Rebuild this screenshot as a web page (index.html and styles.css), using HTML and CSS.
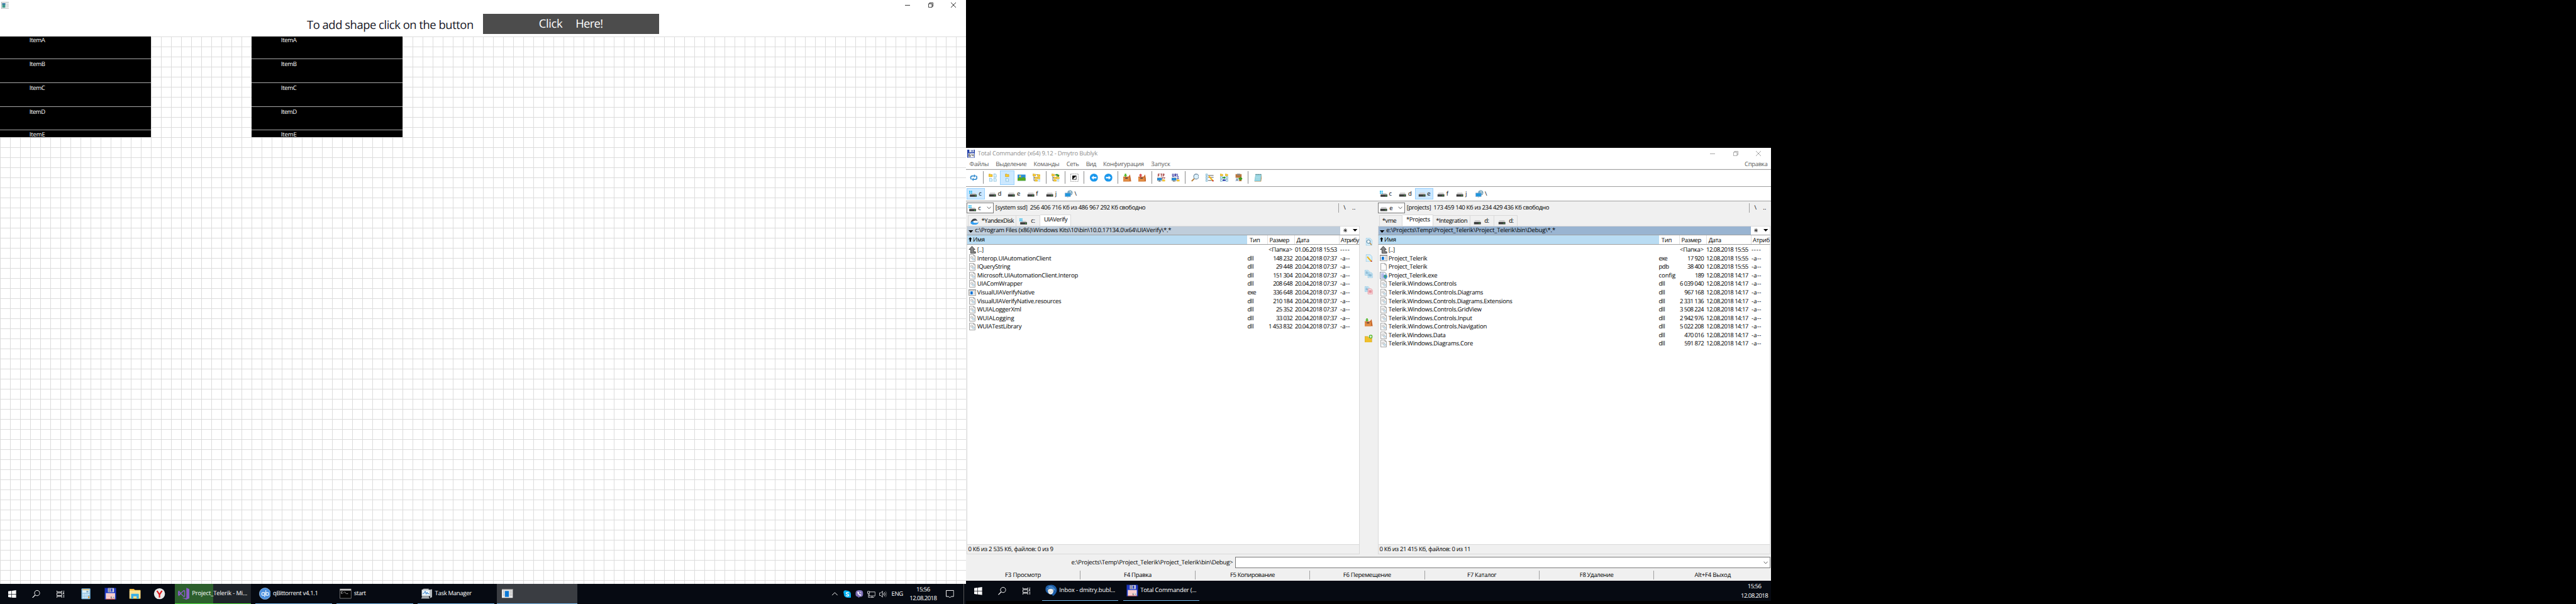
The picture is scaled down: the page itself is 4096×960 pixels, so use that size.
FILE: index.html
```html
<!DOCTYPE html>
<html lang="ru">
<head>
<meta charset="utf-8">
<title>Desktop</title>
<link rel="stylesheet" href="styles.css">
</head>
<body>
<svg class="defs" aria-hidden="true">
  <symbol id="app" viewBox="0 0 16 14"><rect x=".5" y=".5" width="15" height="13" fill="#f4f4f4" stroke="#a9b0b0"/><rect x="2" y="2.5" width="6" height="9" fill="#3f9a8a"/><path d="M2 2.500h6v3H2z" fill="#3c78a8"/><path d="M9 2.500h3v9H9z" fill="#dfe3e3"/><path d="M13 3h1v8h-1z" fill="#b8c0c0"/></symbol>
  <symbol id="min" viewBox="0 0 10 10"><path d="M0 5.500h10" stroke="currentColor" fill="none"/></symbol>
  <symbol id="restore" viewBox="0 0 10 10"><path d="M.5 2.500h7v7h-7zM2.500 2.500v-2h7v7h-2" stroke="currentColor" fill="none"/></symbol>
  <symbol id="close" viewBox="0 0 10 10"><path d="M0 0l10 10M10 0L0 10" stroke="currentColor" fill="none"/></symbol>
  <symbol id="win" viewBox="0 0 16 16"><path d="M0 2.300L6.600 1.300V7.600H0zM7.400 1.200L16 0v7.600H7.400zM0 8.400h6.600v6.300L0 13.700zM7.400 8.400H16V16l-8.600-1.200z" fill="#fff"/></symbol>
  <symbol id="search" viewBox="0 0 16 16"><circle cx="10" cy="5.800" r="5.200" fill="none" stroke="#fff" stroke-width="1.200"/><path d="M6.200 9.700L.5 15.500" stroke="#fff" stroke-width="1.400"/></symbol>
  <symbol id="tview" viewBox="0 0 16 16"><path d="M.5 1v2.500h10V1M.5 15v-2.500h10V15M.5 5.500h10v5H.5zM14.500 1v2.500M14.500 8.500V15" fill="none" stroke="#fff" stroke-width="1.200"/><path d="M13 4.500h3v3h-3z" fill="#fff"/></symbol>
  <symbol id="calc" viewBox="0 0 18 22"><rect x=".5" y=".5" width="17" height="21" rx="1" fill="#8fc3e6" stroke="#5e9fca"/><path d="M2 2h14v2H2z" fill="#f2c36a"/><path d="M2 4h14v5H2z" fill="#dff1fb"/><path d="M10 5h4v3h-4z" fill="#7ea9c4"/><path d="M2.500 11h2.500v2H2.500zM6.300 11h2.500v2H6.300zM10 11h2.500v2H10zM13.500 11H16v2h-2.500zM2.500 14.300h2.500v2H2.500zM6.300 14.300h2.500v2H6.300zM10 14.300h2.500v2H10zM2.500 17.600h2.500v2H2.500zM6.300 17.600h2.500v2H6.300zM10 17.600h2.500v2H10z" fill="#f1f9fe"/><path d="M13.500 16H16v4h-2.500z" fill="#f0a030"/></symbol>
  <symbol id="floppy" viewBox="0 0 24 24"><path d="M.5.5h22l1 1v22H.5z" fill="#2038c0" stroke="#10206c"/><path d="M7 1h12v8H7z" fill="#d4d4dc"/><path d="M8 1h4v8H8z" fill="#8e8ea4"/><path d="M13 2h3v6h-3z" fill="#2038c0"/><path d="M3 11h18v12H3z" fill="#fff5f5"/><path d="M4 13h16M4 16h16M4 19h9" stroke="#f0a0a0" stroke-width="1.500"/><path d="M3 22h18v1.500H3z" fill="#c03030"/><path d="M13 18h2M13 18v3h2v-1.500h-2M17 18v1.500h2M19 18v3" stroke="#555" stroke-width=".8" fill="none"/></symbol>
  <symbol id="tc64" viewBox="0 0 16 16"><path d="M0 0h15l1 1v15H0z" fill="#2440a8"/><path d="M4 0h9v5H4z" fill="#dde2ee"/><path d="M8.500 1h2v3h-2z" fill="#2440a8"/><path d="M2 7h12v8H2z" fill="#fff"/><path d="M6.500 8.500h-3v5h3V11h-3M9 8.500V11h3.500M12 8.500v5" stroke="#333" fill="none"/></symbol>
  <symbol id="explorer" viewBox="0 0 22 20"><path d="M1 1h8l2 2h10v16H1z" fill="#f0b93a"/><path d="M1 4h20v14H1z" fill="#fde394"/><path d="M4 11q0-1 1-1h12q1 0 1 1v8h-4v-4.500H8V19H4z" fill="#3bb0e6"/></symbol>
  <symbol id="yandex" viewBox="0 0 22 22"><circle cx="11" cy="11" r="11" fill="#e9e9e9"/><path d="M6 5l5 7.500L16 5M11 12v6.500" fill="none" stroke="#e0181c" stroke-width="2.800"/></symbol>
  <symbol id="vs" viewBox="0 0 24 24"><path d="M17 0l6 2.500v19L17 24 8 20.500l9 .5z" fill="#8a5cc8"/><path d="M2 7.500v7.500l3.500-3.800zM2 7l3.500 4.200L12 5.500l1.500.8V17l-1.500.8-6.500-6L2 15.500l-1-.8V7.500z" fill="none" stroke="#8a5cc8" stroke-width="1.700"/></symbol>
  <symbol id="qb" viewBox="0 0 24 24"><circle cx="12" cy="12" r="11.500" fill="#4b8fdc" stroke="#9cc6f2"/><circle cx="8.300" cy="12.500" r="3" fill="none" stroke="#e4f0fc" stroke-width="1.500"/><path d="M11.300 9v10M13.600 5v11" stroke="#e4f0fc" stroke-width="1.500"/><circle cx="16.700" cy="12.500" r="3" fill="none" stroke="#e4f0fc" stroke-width="1.500"/></symbol>
  <symbol id="cmd" viewBox="0 0 24 20"><path d="M.5.500h23v19H.5z" fill="#050505" stroke="#9a9a9a"/><path d="M1 1h22v2.500H1z" fill="#e4e4e4"/><path d="M6 6H3.500v3.500H6M8 6.500v.8M8 8.500v.8M10 6l2.500 3.500M13.500 10H17" stroke="#ddd" fill="none"/></symbol>
  <symbol id="tm" viewBox="0 0 24 22"><path d="M3 3l3-2h11l-2 2z" fill="#c9cdd0"/><path d="M2 3h17v13H2z" fill="#e4e8ea"/><path d="M4 5h13v9H4z" fill="#e9f6ff"/><path d="M4 11l3-1 2-4 2 6 2-4 1 3h3" fill="none" stroke="#2c78c4" stroke-width="1.200"/><path d="M19 3l4-1v16l-4 2z" fill="#b4b9bd"/><path d="M3 16h13l2 5H1z" fill="#a4a9ad"/></symbol>
  <symbol id="appwin" viewBox="0 0 22 18"><path d="M0 0h22v18H0z" fill="#eee"/><path d="M0 0h22v2H0z" fill="#8b8b8b"/><path d="M6 4h8v12H6z" fill="#0a78d6"/><path d="M2 4.500h3M2 7.500h3M2 10.500h3M2 13.500h3M15.500 4.500h5M15.500 7.500h5M15.500 10.500h5M15.500 13.500h5" stroke="#999"/></symbol>
  <symbol id="up" viewBox="0 0 12 7"><path d="M.5 6.500L6 1l5.500 5.500" stroke="#fff" fill="none" stroke-width="1.200"/></symbol>
  <symbol id="skype" viewBox="0 0 16 16"><circle cx="8" cy="8" r="7" fill="#00aff0"/><circle cx="4.500" cy="4.500" r="4.300" fill="#00aff0"/><circle cx="11.500" cy="11.500" r="4.300" fill="#00aff0"/><path d="M10.800 5.600C10 4 5.600 4 5.600 6.100c0 2.300 5.200 1.500 5.200 3.800 0 2.200-4.700 2.200-5.500.3" stroke="#fff" stroke-width="1.700" fill="none"/></symbol>
  <symbol id="viber" viewBox="0 0 16 16"><path d="M8 0c6 0 7.500 2 7.500 6.800S14 13.500 8.500 13.500L6 16v-2.700C1.500 12.500.5 11 .5 6.800S2 0 8 0z" fill="#7d6fb6"/><path d="M4.500 3.500c-1 2.500 3 8 6.500 7.500l.8-1.500L9.800 8l-1 .8C7.800 8.300 7 7 6.700 6l.8-1-1.200-2zM8.500 3c2 .2 3 1.500 3.200 3.500" fill="#fff" stroke="#fff" stroke-width=".4"/></symbol>
  <symbol id="net" viewBox="0 0 16 16"><path d="M5 3.500h10.500v8H4V8M9.500 11.500v3M5.500 14.500h8M.5 2.500h4v4h-4zM2.500 6.500v8H5" stroke="#fff" fill="none"/></symbol>
  <symbol id="vol" viewBox="0 0 16 16"><path d="M.5 5.500h2.500L6.500 2v12L3 10.500H.5zM8.500 6q1.500 2 0 4M10.500 4q3 4 0 8" stroke="#fff" fill="none"/><path d="M12.500 2q4.500 6 0 12" stroke="#777" fill="none"/></symbol>
  <symbol id="note" viewBox="0 0 16 16"><path d="M.6.600h14.800v12H10.500L8 15.300l-2.500-2.700H.6z" stroke="#fff" fill="none" stroke-width="1.200"/></symbol>
  <symbol id="bird" viewBox="0 0 24 24"><path d="M12 .5C19 0 24 6 23.500 12S17 23 15 23.500c1-3-2-3.500-5-4S0 16 .5 9 5 1 12 .5z" fill="#1f5fa8"/><path d="M5 11q6-5 12 0-1 9-6 9t-6-9z" fill="#f1f1ee"/><path d="M3 9q8-6 15 1M7 4q9-2 13 8" stroke="#7cb9ea" fill="none"/><path d="M5 11l6 5 6-5" stroke="#b0b0a8" fill="none"/></symbol>

  <symbol id="i-ref" viewBox="0 0 16 16"><path d="M9 4.500H5Q1.800 4.800 1.800 8q0 2 1.500 3.300M7 11.500h4q3.200-.3 3.200-3.500 0-2-1.500-3.300" stroke="#3b8fd0" stroke-width="2.200" fill="none"/><path d="M8.500 1.200v6.600L12.300 4.500zM7.500 8.200v6.600L3.700 11.500z" fill="#3b8fd0"/></symbol>
  <symbol id="fold" viewBox="0 0 8 6"><path d="M.4.400h3l1 1h3.200v4.200H.4z" fill="#fccf30" stroke="#b98a10" stroke-width=".8"/></symbol>
  <symbol id="doc" viewBox="0 0 6 7"><path d="M.4.400h3.400L5.600 2.200v4.400H.4z" fill="#d9f0fc" stroke="#5fa6c8" stroke-width=".8"/></symbol>
  <symbol id="i-thumb" viewBox="0 0 16 16"><use href="#fold" x="0" y="0" width="8" height="7"/><use href="#doc" x="9.500" y="0" width="6.500" height="7.500"/><use href="#doc" x="1" y="8.500" width="6.500" height="7.500"/><use href="#doc" x="9.500" y="8.500" width="6.500" height="7.500"/></symbol>
  <symbol id="i-full" viewBox="0 0 16 16"><use href="#fold" x="4" y="0" width="8" height="7"/><use href="#doc" x="5" y="8.500" width="6.500" height="7.500"/></symbol>
  <symbol id="i-pic" viewBox="0 0 16 16"><path d="M0 2h16v12H0z" fill="#2a8fd8"/><path d="M0 10q4-5 7-1 4-4 9 0v5H0z" fill="#56a81e"/><circle cx="5" cy="5" r="2" fill="#ffd83c"/></symbol>
  <symbol id="i-tree" viewBox="0 0 16 16"><path d="M2.500 4v10H10M2.500 8H10M7 2h3" stroke="#555" fill="none"/><use href="#fold" x="0" y="0" width="6.500" height="5"/><use href="#fold" x="9" y="1" width="6.500" height="5"/><use href="#fold" x="4" y="6" width="6" height="5"/><use href="#fold" x="10" y="6" width="6" height="5"/><use href="#fold" x="4" y="11" width="6" height="5"/><use href="#doc" x="11" y="11" width="4.500" height="5"/></symbol>
  <symbol id="i-branch" viewBox="0 0 16 16"><use href="#i-tree" width="16" height="16"/><path d="M8 3.500Q11 0 13 3.500" stroke="#18902c" stroke-width="2" fill="none"/><path d="M10.500 3H16l-2.700 3.500z" fill="#18902c"/></symbol>
  <symbol id="i-sel" viewBox="0 0 16 16"><path d="M.5.500h15v15H.5z" fill="none" stroke="#333" stroke-dasharray="1 1"/><path d="M4.500 4.500h7v7h-7z" fill="#fff" stroke="#000"/><path d="M4 12V4h8z" fill="#000"/></symbol>
  <symbol id="i-left" viewBox="0 0 16 16"><circle cx="8" cy="8" r="8" fill="#1a97ec"/><path d="M3 8l4.500-4v2.500H13v3H7.500V12z" fill="#fff"/></symbol>
  <symbol id="i-right" viewBox="0 0 16 16"><circle cx="8" cy="8" r="8" fill="#1a97ec"/><path d="M13 8L8.500 4v2.500H3v3h5.500V12z" fill="#fff"/></symbol>
  <symbol id="box" viewBox="0 0 16 16"><path d="M0 6h10.500l3-4.500L16 15.500H0z" fill="#c8682a"/><path d="M0 7.500h12.500v8H0z" fill="#e08a42"/><path d="M4 8h5v2H4z" fill="#4a3a48"/></symbol>
  <symbol id="i-pack" viewBox="0 0 16 16"><use href="#box" width="16" height="16"/><path d="M3 0h3v3h2.200L4.500 6.500.8 3H3z" fill="#52b828"/></symbol>
  <symbol id="i-unpack" viewBox="0 0 16 16"><use href="#box" width="16" height="16"/><path d="M3 6.500h3v-3h2.200L4.500 0 .8 3.500H3z" fill="#d84848"/></symbol>
  <symbol id="pcnet" viewBox="0 0 16 16"><path d="M0 8.500h9v5H0z" fill="#1e90e0" stroke="#555" stroke-width=".6"/><path d="M2 15.500h6M4.500 13.500v2" stroke="#333"/><use href="#fold" x="10" y="11" width="6" height="5"/></symbol>
  <symbol id="i-ftp" viewBox="0 0 16 16"><path d="M2 6V.500h3M2 3h2.500M6.500.5h3.400M8.200.5V6M11.500 6V.500h2.300v2.800h-2.300" stroke="#8c1010" fill="none" stroke-width="1.100"/><path d="M9.500 8.500h6M11 7L9.500 8.500 11 10M14 7l1.500 1.500L14 10" stroke="#8c1010" fill="none"/><use href="#pcnet" width="16" height="16"/></symbol>
  <symbol id="i-url" viewBox="0 0 16 16"><path d="M1.600 0v5.500h2.600V0M6.600 6V.500H9v2.300H6.600M7.800 3L9.300 6M11.500 0v5.500H14" stroke="#10108c" fill="none" stroke-width="1.100"/><path d="M12.500 7v4M10.500 9h4" stroke="#10108c"/><use href="#pcnet" width="16" height="16"/></symbol>
  <symbol id="i-find" viewBox="0 0 16 16"><path d="M6.500 9.500L1 15" stroke="#b8803c" stroke-width="2.400"/><circle cx="10" cy="5.800" r="5" fill="#dcf1fc" stroke="#68849a" stroke-width="1.300"/></symbol>
  <symbol id="i-ren" viewBox="0 0 16 16"><path d="M5 3.500h11M5 7.500h11M5 13.500h11" stroke="#333"/><path d="M.5.500h3v4h-3zM.5 6h3v4h-3zM.5 11.500h3v4h-3z" fill="#d9f0fc" stroke="#68a6c4"/><path d="M6.500 5l8 9" stroke="#f2b41c" stroke-width="2.600"/><path d="M13.500 13l2 2.500" stroke="#d02020" stroke-width="2"/></symbol>
  <symbol id="i-sync" viewBox="0 0 16 16"><use href="#fold" x="0" y="0" width="6" height="5"/><use href="#fold" x="10" y="0" width="6" height="5"/><path d="M.5 6h4v4h-4zM.5 11.500h4v4h-4zM11.500 6h4v4h-4zM11.500 11.500h4v4h-4z" fill="#d9f0fc" stroke="#68a6c4"/><path d="M5 6.800h3V5l3 3-3 2.600V9H5z" fill="#108c20"/><path d="M11 11.800H8V10l-3 3 3 2.600V14h3z" fill="#1020a0"/></symbol>
  <symbol id="i-clip" viewBox="0 0 16 16"><path d="M2 1h12v14H2z" fill="#b9763c"/><path d="M5 0h6v3H5z" fill="#8d8d8d"/><path d="M1 8h8v8H1z" fill="#f0f4f8"/><path d="M3 14.500l2-5 2 5M3.700 13h2.600" stroke="#3c6c9c" fill="none"/><path d="M8 8.500h3.500V6L16 10l-4.500 4v-2.500H8z" fill="#3a9c1c"/></symbol>
  <symbol id="i-pad" viewBox="0 0 16 16"><path d="M3 2h13l-2 14H1z" fill="#b98b50"/><path d="M3 1h12l-2 14H.5z" fill="#8ed0de"/><path d="M3.500 1v1.500M5.500 1v1.500M7.500 1v1.500M9.500 1v1.500M11.500 1v1.500M13.500 1v1.500" stroke="#355"/><path d="M3.500 5h9M3 8h9M3 11h9" stroke="#c8ecf2"/></symbol>
  <symbol id="hdd" viewBox="0 0 16 13"><path d="M3 4h10l2 3.500H1z" fill="#c9c9c9"/><path d="M1 7.500h14v4.500H1z" fill="#3b3b3b"/><path d="M11 9h2v1.500h-2z" fill="#3ee04a"/></symbol>
  <symbol id="hddw" viewBox="0 0 16 13"><path d="M5 5h8l2.500 3H1z" fill="#c9c9c9"/><path d="M1.500 8h14v4.500h-14z" fill="#3b3b3b"/><path d="M12 9.500h2V11h-2z" fill="#3ee04a"/><path d="M0 0h2.500v2.500H0zM3.500 0H6v2.500H3.500zM0 3.500h2.500V6H0zM3.500 3.500H6V6H3.500z" fill="#19b4ee"/></symbol>
  <symbol id="globe" viewBox="0 0 16 16"><circle cx="10.500" cy="5.500" r="5.300" fill="#7ba6bc"/><path d="M8 1q4 1 6 7M13 1.500Q9 5 9 10" stroke="#d8e8ee" fill="none"/><path d="M.5 6h11v7H.5z" fill="#1d95dc" stroke="#9ac" stroke-width=".8"/><path d="M3 15.500h7M6 13v2" stroke="#8aa"/></symbol>
  <symbol id="ydisk" viewBox="0 0 17 13"><path d="M1 6Q5-1 11 1q3 3 5 7L1 9z" fill="#3d434a"/><ellipse cx="8" cy="9" rx="7.500" ry="3.800" fill="#2f9cf0"/><ellipse cx="10.500" cy="6.800" rx="5" ry="2.300" fill="#eef4f8"/></symbol>
  <symbol id="chev" viewBox="0 0 9 6"><path d="M.7.800l3.800 4 3.800-4" fill="none" stroke="#444" stroke-width="1.100"/></symbol>
  <symbol id="tri" viewBox="0 0 9 5"><path d="M0 0h9L4.500 5z" fill="#000"/></symbol>
  <symbol id="star" viewBox="0 0 8 8"><path d="M4 0v8M0 4h8M1 1l6 6M7 1L1 7" stroke="#000" stroke-width=".9"/></symbol>
  <symbol id="arr" viewBox="0 0 7 9"><path d="M3.500 0L7 4H4.800v5H2.200V4H0z" fill="#000"/></symbol>
  <symbol id="f-up" viewBox="0 0 14 14"><path d="M6.500.500l5.500 6H9.500v4H13v3H4v-7H1z" fill="#888" stroke="#333"/></symbol>
  <symbol id="f-dll" viewBox="0 0 14 15"><path d="M1.500.500h8l3 3v11h-11z" fill="#fbfbfb" stroke="#888"/><path d="M9.500.500v3h3" fill="none" stroke="#888"/><circle cx="6" cy="6.500" r="2.200" fill="#e6e6e6" stroke="#8a8a8a" stroke-dasharray="1 .5"/><circle cx="9" cy="10" r="2" fill="#cfe6f6" stroke="#8ab" stroke-dasharray="1 .5"/></symbol>
  <symbol id="f-pdb" viewBox="0 0 14 15"><path d="M1.500.500h8l3 3v11h-11z" fill="#fbfbfb" stroke="#888"/><path d="M9.500.500v3h3" fill="none" stroke="#888"/></symbol>
  <symbol id="f-exe" viewBox="0 0 16 13"><path d="M.5.500h15v12H.5z" fill="#fff" stroke="#777"/><path d="M0 0h16v2H0z" fill="#888"/><path d="M4 4h5v6.500H4z" fill="#0b72d4"/><path d="M10.500 4.500H14M10.500 7H14M10.500 9.500H14M2 4v7" stroke="#999"/></symbol>
  <symbol id="f-config" viewBox="0 0 15 15"><path d="M.5.500h9l3 3v11H.5z" fill="#f6faff" stroke="#567"/><path d="M2.500 4h6M2.500 6.500h6M2.500 9h5M2.500 11.500h5" stroke="#5560c0"/><circle cx="11" cy="9.500" r="3.800" fill="#3c8cc8"/><path d="M9 7q3-1 3 2t-2 3z" fill="#4cb040"/></symbol>
  <symbol id="sheet" viewBox="0 0 14 16"><path d="M.5.500h9l4 4v11H.5z" fill="#d8effb" stroke="#8cc4e0"/></symbol>
  <symbol id="m-view" viewBox="0 0 16 16"><use href="#sheet" x="2" width="13" height="16"/><path d="M10 10l3.500 4" stroke="#c88a3c" stroke-width="2"/><circle cx="7.500" cy="7.500" r="3.500" fill="#eefaff" stroke="#5c86a0" stroke-width="1.300"/></symbol>
  <symbol id="m-edit" viewBox="0 0 16 16"><use href="#sheet" x="2" width="13" height="16"/><path d="M5 5l8 9" stroke="#f2b41c" stroke-width="2.600"/><path d="M12.500 13l1.500 2" stroke="#c22" stroke-width="2"/></symbol>
  <symbol id="m-copy" viewBox="0 0 16 16"><path d="M.5.500h6l2 2v8h-8zM6.500 5h6l3 2.500v8h-9z" fill="#d8effb" stroke="#8cc4e0"/><path d="M2 3.500h4M2 5.500h4M2 7.500h4M8 8.500h6M8 10.500h6M8 12.500h6" stroke="#5090b8"/></symbol>
  <symbol id="m-move" viewBox="0 0 16 16"><path d="M.5.500h6l2 2v8h-8z" fill="#d8effb" stroke="#8cc4e0"/><path d="M6.500 5h6l3 2.500v8h-9z" fill="#fbdfe2" stroke="#e48c96"/><path d="M2 3.500h4M2 5.500h4M2 7.500h4" stroke="#5090b8"/><path d="M8 8.500h6M8 10.500h6M8 12.500h6" stroke="#d05060"/></symbol>
  <symbol id="m-new" viewBox="0 0 16 16"><path d="M0 3.500h6l1.500 2H14v10H0z" fill="#f0c02c" stroke="#c8981c" stroke-width=".7"/><circle cx="12" cy="3.800" r="3.700" fill="#58b82c"/><path d="M12 1.500v4.600M9.700 3.800h4.600" stroke="#fff" stroke-width="1.300"/></symbol>
</svg>

<div class="desk">
  <section class="left">
    <header class="titlebar">
      <svg class="appicon"><use href="#app"/></svg>
      <div class="winbtns"><svg><use href="#min"/></svg><svg><use href="#restore"/></svg><svg><use href="#close"/></svg></div>
    </header>
    <div class="form">
      <span class="prompt" data-w="331">To add shape click on the button</span>
      <div class="button"><span data-w="47">Click</span><span data-w="54">Here!</span></div>
    </div>
    <div class="canvas">
      <div class="shape shape-a"><div data-items></div></div>
      <div class="shape shape-b"><div data-items></div></div>
    </div>
    <footer class="taskbar">
      <div class="sys"><svg><use href="#win"/></svg><svg><use href="#search"/></svg><svg><use href="#tview"/></svg></div>
      <div class="pins"><svg class="p-calc"><use href="#calc"/></svg><svg class="p-big"><use href="#floppy"/></svg><svg class="p-fold"><use href="#explorer"/></svg><svg class="p-fold"><use href="#yandex"/></svg></div>
      <div class="tasks">
        <div class="task building"><svg><use href="#vs"/></svg><span data-w="110">Project_Telerik - Mi...</span></div>
        <div class="task"><svg><use href="#qb"/></svg><span data-w="89.5">qBittorrent v4.1.1</span></div>
        <div class="task"><svg><use href="#cmd"/></svg><span data-w="23.5">start</span></div>
        <div class="task"><svg><use href="#tm"/></svg><span data-w="73">Task Manager</span></div>
        <div class="task active"><svg><use href="#appwin"/></svg></div>
      </div>
      <div class="tray"><svg class="small"><use href="#up"/></svg><svg><use href="#skype"/></svg><svg><use href="#viber"/></svg><svg><use href="#net"/></svg><svg><use href="#vol"/></svg></div>
      <span class="lang" data-w="23">ENG</span>
      <div class="clock"><span data-w="27">15:56</span><span data-w="54">12.08.2018</span></div>
      <svg class="note"><use href="#note"/></svg>
      <i class="peek"></i>
    </footer>
  </section>

  <section class="right">
    <div class="tc">
      <header class="tctitle"><svg class="tcicon"><use href="#tc64"/></svg><span data-w="237.7">Total Commander (x64) 9.12 - Dmytro Bublyk</span>
        <div class="winbtns"><svg><use href="#min"/></svg><svg><use href="#restore"/></svg><svg><use href="#close"/></svg></div></header>
      <nav class="menu"><span data-w="38">Файлы</span><span data-w="61">Выделение</span><span data-w="51">Команды</span><span data-w="24.500">Сеть</span><span data-w="20">Вид</span><span data-w="81">Конфигурация</span><span data-w="38.500">Запуск</span><span class="help" data-w="45.500">Справка</span></nav>
      <div class="toolbar" data-tools="ref | thumb full! pic tree | branch | sel | left right | pack unpack | ftp url | find ren sync clip | pad"></div>
      <div class="drives"><div class="driveset" data-drives="0"></div><div class="driveset second" data-drives="2"></div></div>
      <div class="panes">
        <div class="pane pane-l">
          <div class="info"><div class="combo"><svg class="hd"><use href="#hddw"/></svg><b>c</b><svg class="chev"><use href="#chev"/></svg></div><span data-w="298">[system ssd]  256 406 716 Кб из 486 967 292 Кб свободно</span><div class="nav"><i>\</i><i>..</i></div></div>
          <div class="tabs"><div class="tab t1"><svg class="yd"><use href="#ydisk"/></svg><span data-w="64.500">*YandexDisk</span></div><div class="tab t2"><svg class="hd"><use href="#hddw"/></svg><span data-w="8">c:</span></div><div class="tab t3 on"><span data-w="46.500">UIAVerify</span></div></div>
          <div class="path"><div class="where"><svg><use href="#tri"/></svg><span data-w="390">c:\Program Files (x86)\Windows Kits\10\bin\10.0.17134.0\x64\UIAVerify\*.*</span></div><svg class="st"><use href="#star"/></svg><svg class="tr"><use href="#tri"/></svg></div>
          <div class="cols"><div class="name"><svg><use href="#arr"/></svg><span data-w="23.500">Имя</span></div><div class="c1"><span data-w="20.500">Тип</span></div><div class="c2"><span data-w="39.500">Размер</span></div><div class="c3"><span data-w="25">Дата</span></div><div class="c4"><span data-w="36">Атрибу</span></div></div>
          <div class="list" data-list="left"></div>
          <div class="sum"><span data-w="169">0 Кб из 2 535 Кб, файлов: 0 из 9</span></div>
        </div>
        <div class="mid"><svg><use href="#m-view"/></svg><svg><use href="#m-edit"/></svg><svg><use href="#m-copy"/></svg><svg><use href="#m-move"/></svg><svg class="gap"><use href="#i-pack"/></svg><svg><use href="#m-new"/></svg></div>
        <div class="pane pane-r">
          <div class="info"><div class="combo"><svg class="hd"><use href="#hdd"/></svg><b>e</b><svg class="chev"><use href="#chev"/></svg></div><span data-w="283">[projects]  173 459 140 Кб из 234 429 436 Кб свободно</span><div class="nav"><i>\</i><i>..</i></div></div>
          <div class="tabs"><div class="tab r1"><span data-w="28">*vme</span></div><div class="tab r2 on"><span data-w="47">*Projects</span></div><div class="tab r3"><span data-w="62.500">*Integration</span></div><div class="tab r4"><svg class="hd"><use href="#hdd"/></svg><span data-w="9">d:</span></div><div class="tab r5"><svg class="hd"><use href="#hdd"/></svg><span data-w="9">d:</span></div></div>
          <div class="path"><div class="where"><svg><use href="#tri"/></svg><span data-w="336">e:\Projects\Temp\Project_Telerik\Project_Telerik\bin\Debug\*.*</span></div><svg class="st"><use href="#star"/></svg><svg class="tr"><use href="#tri"/></svg></div>
          <div class="cols"><div class="name"><svg><use href="#arr"/></svg><span data-w="23.500">Имя</span></div><div class="c1"><span data-w="20.500">Тип</span></div><div class="c2"><span data-w="39.500">Размер</span></div><div class="c3"><span data-w="25">Дата</span></div><div class="c4"><span data-w="33.500">Атриб</span></div></div>
          <div class="list" data-list="right"></div>
          <div class="sum"><span data-w="181">0 Кб из 21 415 Кб, файлов: 0 из 11</span></div>
        </div>
      </div>
      <div class="cmdline"><span data-w="321">e:\Projects\Temp\Project_Telerik\Project_Telerik\bin\Debug&gt;</span><div class="input"><svg class="chev"><use href="#chev"/></svg></div></div>
      <div class="keys"><div><span data-w="71.500">F3 Просмотр</span></div><div><span data-w="55">F4 Правка</span></div><div><span data-w="89">F5 Копирование</span></div><div><span data-w="95">F6 Перемещение</span></div><div><span data-w="58">F7 Каталог</span></div><div><span data-w="67">F8 Удаление</span></div><div><span data-w="72">Alt+F4 Выход</span></div></div>
    </div>
    <footer class="taskbar">
      <div class="sys"><svg><use href="#win"/></svg><svg><use href="#search"/></svg><svg><use href="#tview"/></svg></div>
      <div class="tasks second">
        <div class="task"><svg><use href="#bird"/></svg><span data-w="111">Inbox - dmitry.bubl...</span></div>
        <div class="task"><svg><use href="#floppy"/></svg><span data-w="111.500">Total Commander (...</span></div>
      </div>
      <div class="clock last"><span data-w="27">15:56</span><span data-w="54">12.08.2018</span></div>
    </footer>
  </section>
</div>
<script src="app.js"></script>
</body>
</html>
```

FILE: styles.css
```css
* { box-sizing: border-box; }
html { background: #000; }
body {
  margin: 0;
  width: 4096px;
  height: 960px;
  overflow: hidden;
  background: #000;
}
svg { display: block; flex: none; }
i { font-style: normal; }
.defs { position: absolute; width: 0; height: 0; }
[data-w] { white-space: pre; flex: none; }
.desk {
  zoom: .8;
  width: 5120px;
  height: 1200px;
  display: flex;
  color: #000;
  font: 12px/16px "Open Sans", "Noto Sans", sans-serif;
  text-rendering: geometricPrecision;
}
.left { width: 1920px; height: 1200px; display: flex; flex-direction: column; background: #fff; }
.right { width: 1600px; height: 1200px; padding-top: 294px; display: flex; flex-direction: column; }

.titlebar { height: 21px; display: flex; align-items: center; padding: 0 20px 0 2px; }
.appicon { width: 16px; height: 14px; }
.winbtns { margin-left: auto; display: flex; gap: 35.500px; }
.winbtns svg { width: 10px; height: 10px; }
.form { height: 52px; padding: 7px 0 5px 610px; display: flex; align-items: flex-start; }
.prompt { font-size: 23px; line-height: 42px; padding-top: 1px; width: 350px; color: #15151f; }
.button { width: 350px; height: 40px; background: #4c4c4c; color: #fff; display: flex; gap: 26px; padding-left: 111px; font-size: 23px; line-height: 40px; }
.canvas {
  position: relative;
  flex: 1;
  background-image: linear-gradient(#dcdcdc 1.250px, transparent 1.250px), linear-gradient(90deg, #dcdcdc 1.250px, transparent 1.250px);
  background-size: 20px 20px;
}
.shape { position: absolute; top: 0; width: 300px; height: 200px; background: #000; color: #fff; }
.shape-a { left: 0; }
.shape-b { left: 500px; }
.item { height: 47px; border-bottom: 1.250px solid #a8a8a8; padding: 0 0 0 58.500px; line-height: 20px; }
.item:first-child { height: 45px; line-height: 15px; }
.item:last-child { height: 14px; border: 0; line-height: 17px; }

.taskbar { height: 40px; flex: none; background: #060a12; color: #fff; display: flex; align-items: center; }
.sys { display: flex; gap: 32px; padding: 0 16px; }
.sys svg { width: 16px; height: 16px; }
.pins { display: flex; align-items: center; width: 198px; padding-left: 2px; }
.pins svg { width: 24px; height: 24px; margin: 0 12.500px; }
.pins .p-calc { width: 24px; height: 22px; }
.pins .p-fold { width: 24px; height: 22px; }
.tasks { display: flex; gap: 9px; padding-left: 5px; }
.tasks.second { padding-left: 7px; }
.task { width: 152px; height: 40px; border-bottom: 2px solid #76b9ed; display: flex; align-items: center; gap: 4.500px; padding-left: 6.500px; }
.task svg { width: 23.500px; height: 24px; }
.task.building { background: linear-gradient(90deg, #2d5f2d 76px, #1f242a 76px); border-color: #4ce03c; }
.task.active { width: 160px; margin-left: -4px; background: #3a3d42; padding-left: 11px; }
.task.active svg { width: 22px; height: 18px; }
.tray { margin-left: auto; display: flex; align-items: center; gap: 8px; padding-right: 8px; }
.tray svg { width: 16px; height: 16px; }
.tray .small { width: 16px; height: 7px; }
.clock { width: 60px; margin: 1px 15px 0 10px; display: flex; flex-direction: column; align-items: center; line-height: 18px; }
.clock.last { margin: 1px 3px 0 auto; }
.note { width: 16px; height: 16px; }
.peek { width: 1.250px; height: 40px; background: #555; margin: 0 4px 0 19px; }

.tc { height: 860px; background: #f0f0f0; display: flex; flex-direction: column; }
.tctitle { height: 24px; background: #fff; color: #909090; display: flex; align-items: center; padding: 0 20px 0 2px; }
.tctitle .winbtns { padding-bottom: 3px; }
.tcicon { width: 16px; height: 16px; margin-right: 5.500px; }
.menu { height: 17px; background: #fff; color: #606060; display: flex; gap: 14.200px; padding: 1px 7px 0 7px; }
.menu .help { margin-left: auto; }
.toolbar { height: 35px; border-top: 2px solid #f0f0f0; background: #fff; display: flex; align-items: center; box-shadow: inset 0 1.250px #a0a0a0; padding-left: .5px; }
.tool { width: 29px; height: 28px; display: flex; align-items: center; justify-content: center; }
.tool svg { width: 16px; height: 16px; }
.tool.on, .drive.on { background: #cce8ff; border: 1.250px solid #99d1ff; }
.sep { width: 1.250px; height: 25px; margin: 0 3.900px; background: #8c8c8c; }
.drives { height: 30px; background: #fff; border-top: 1.250px solid #a0a0a0; border-bottom: 1.250px solid #a0a0a0; display: flex; align-items: center; }
.driveset { width: 815.500px; flex: none; padding-left: 1.500px; display: flex; gap: 2.500px; }
.driveset.second { width: 784.500px; }
.drive { width: 35.500px; height: 22px; display: flex; align-items: center; gap: 3px; padding: 0 0 0 4px; border: 1.250px solid transparent; }
.drive svg { width: 15.500px; height: 13px; }
.drive .globe { width: 16px; height: 16px; }
.panes { height: 701.500px; display: flex; }
.pane { display: flex; flex-direction: column; height: 701.500px; }
.pane-l { width: 782px; padding-left: 1.500px; }
.pane-r { width: 781px; padding-right: 1.500px; }
.info { height: 26px; flex: none; display: flex; align-items: center; }
.combo { width: 53.500px; height: 22px; margin-right: 3.500px; border: 1.250px solid #7a7a7a; background: #fff; display: flex; align-items: center; padding: 0 3px 0 2px; }
.combo b { font-weight: 400; margin-left: 4px; padding-top: 2px; }
.hd { width: 15.500px; height: 13px; margin-top: 1px; }
.chev { width: 9px; height: 6px; margin-left: auto; }
.nav { margin-left: auto; width: 42px; border-left: 1.250px solid #a0a0a0; padding-left: 9px; display: flex; gap: 13px; line-height: 18px; height: 18px; }
.tabs { height: 22.500px; flex: none; display: flex; align-items: flex-end; padding-left: 2px; }
.tab { height: 20.500px; border: 1.250px solid #d9d9d9; border-bottom: 0; border-left-width: 0; display: flex; align-items: center; padding-top: 2px; }
.tab:first-child { border-left-width: 1.250px; }
.tab.on { height: 22.500px; background: #fff; padding-bottom: 2px; padding-top: 0; }
.t1 { width: 97px; padding-left: 4px; gap: 5px; }
.yd { width: 17px; height: 13px; }
.t2 { width: 46.500px; padding-left: 6px; gap: 7px; }
.t3 { width: 62px; padding-left: 8px; }
.r1 { width: 46.500px; padding-left: 5px; }
.r2 { width: 61.500px; padding-left: 7.500px; }
.r3 { width: 73px; padding-left: 5px; }
.r4 { width: 48.500px; padding-left: 7px; gap: 6px; }
.r5 { width: 46px; padding-left: 7px; gap: 6px; }
.path { height: 19px; flex: none; background: #fff; border: 1.250px solid #d9d9d9; border-bottom-color: #a0a0a0; display: flex; align-items: center; }
.where { width: 741px; height: 17px; background: #bfcddb; display: flex; align-items: center; gap: 3.500px; padding-left: 2.500px; }
.pane-r .where { background: #99b4d1; width: 740px; }
.where svg { width: 9px; height: 5px; margin-top: 5px; }
.st { width: 8px; height: 8px; margin-left: 6px; }
.tr { width: 9px; height: 5px; margin-left: 11px; }
.cols { height: 19px; flex: none; background: #fff; display: flex; border: 1.250px solid #d9d9d9; border-top: 0; border-bottom-color: #a0a0a0; line-height: 19px; }
.cols div { border-left: 1.250px solid #e0e0e0; padding-left: 3.500px; }
.cols .name { width: 557.500px; background: #b9dcf3; border: 0; display: flex; align-items: center; gap: 2px; padding-left: 2px; }
.name svg { width: 7px; height: 9px; }
.cols .c1 { width: 39.500px; border-left-color: #fff; }
.cols .c2 { width: 54px; }
.cols .c3 { width: 89px; }
.cols .c4 { flex: 1; padding-left: 2.500px; white-space: nowrap; }
.list { flex: 1; background: #fff; border: 1.250px solid #d9d9d9; border-top: 0; padding-top: 1px; }
.row { height: 17px; display: grid; grid-template-columns: 19.500px 537px 40px 49.500px 5px 90px 1fr; line-height: 17px; align-items: center; }
.row svg { width: 15px; height: 15px; margin-left: 2.500px; }
.row .size { justify-self: end; }
.row span { justify-self: start; }
.sum { height: 19.500px; flex: none; border: 1.250px solid #d9d9d9; border-top: 0; padding-left: 1.500px; line-height: 18px; }
.mid { width: 37px; padding-top: 72.500px; display: flex; flex-direction: column; align-items: center; gap: 16px; }
.mid svg { width: 16px; height: 16px; }
.mid .gap { margin-top: 32px; }
.cmdline { height: 31px; flex: none; display: flex; align-items: center; padding: 1px 1px 0 209.500px; gap: 4.500px; }
.input { flex: 1; height: 22.500px; border: 1.250px solid #7a7a7a; background: #fff; display: flex; align-items: center; padding-right: 4px; }
.keys { flex: 1; display: flex; align-items: center; padding-bottom: 1px; }
.keys div { width: 228px; height: 18px; border-right: 1.250px solid #a0a0a0; display: flex; justify-content: center; align-items: center; }
.keys div:last-child { border: 0; flex: 1; }
```

FILE: app.js
```js
const icon = (id, cls = '') => `<svg class="${cls}"><use href="#${id}"/></svg>`;

for (const box of document.querySelectorAll('[data-items]')) {
  box.innerHTML = [...'ABCDE'].map(c => `<div class="item"><span data-w="31">Item${c}</span></div>`).join('');
}

for (const bar of document.querySelectorAll('[data-tools]')) {
  bar.innerHTML = bar.dataset.tools.split(' ').map(t =>
    t === '|' ? '<i class="sep"></i>'
      : `<div class="tool${t.endsWith('!') ? ' on' : ''}">${icon('i-' + t.replace('!', ''))}</div>`).join('');
}

for (const bar of document.querySelectorAll('[data-drives]')) {
  bar.innerHTML = [...'cdefj'].map((d, n) =>
    `<div class="drive${n === +bar.dataset.drives ? ' on' : ''}">${icon(n ? 'hdd' : 'hddw')}<i>${d}</i></div>`).join('')
    + `<div class="drive">${icon('globe', 'globe')}<i>\\</i></div>`;
}

// icon, name, name width, type, size, size width, date, attributes
const apr = '20.04.2018 07:37', aug = '12.08.2018 14:17', now = '12.08.2018 15:55';
const lists = {
  left: [
    ['up', '[..]', 12.5, '', '<Папка>', 47.5, '01.06.2018 15:53', '----'],
    ['dll', 'Interop.UIAutomationClient', 147, 'dll', '148 232', 38.5, apr],
    ['dll', 'IQueryString', 65.5, 'dll', '29 448', 32.5, apr],
    ['dll', 'Microsoft.UIAutomationClient.Interop', 200.5, 'dll', '151 304', 38.5, apr],
    ['dll', 'UIAComWrapper', 90, 'dll', '208 648', 38.5, apr],
    ['exe', 'VisualUIAVerifyNative', 114, 'exe', '336 648', 38.5, apr],
    ['dll', 'VisualUIAVerifyNative.resources', 167, 'dll', '210 184', 38.5, apr],
    ['dll', 'WUIALoggerXml', 87.5, 'dll', '25 352', 32.5, apr],
    ['dll', 'WUIALogging', 73.5, 'dll', '33 032', 32.5, apr],
    ['dll', 'WUIATestLibrary', 88, 'dll', '1 453 832', 47.5, apr],
  ],
  right: [
    ['up', '[..]', 12.5, '', '<Папка>', 47.5, now, '----'],
    ['exe', 'Project_Telerik', 77, 'exe', '17 920', 32.5, now],
    ['pdb', 'Project_Telerik', 77, 'pdb', '38 400', 32.5, now],
    ['config', 'Project_Telerik.exe', 97, 'config', '189', 17.5, aug],
    ['dll', 'Telerik.Windows.Controls', 135, 'dll', '6 039 040', 47.5, aug],
    ['dll', 'Telerik.Windows.Controls.Diagrams', 188, 'dll', '967 168', 38.5, aug],
    ['dll', 'Telerik.Windows.Controls.Diagrams.Extensions', 246, 'dll', '2 331 136', 47.5, aug],
    ['dll', 'Telerik.Windows.Controls.GridView', 185, 'dll', '3 508 224', 47.5, aug],
    ['dll', 'Telerik.Windows.Controls.Input', 166, 'dll', '2 942 976', 47.5, aug],
    ['dll', 'Telerik.Windows.Controls.Navigation', 195.5, 'dll', '5 022 208', 47.5, aug],
    ['dll', 'Telerik.Windows.Data', 113.5, 'dll', '470 016', 38.5, aug],
    ['dll', 'Telerik.Windows.Diagrams.Core', 168, 'dll', '591 872', 38.5, aug],
  ],
};
const typeWidth = { dll: 12.5, exe: 17, pdb: 20.5, config: 33.5 };
const esc = s => s.replace('<', '&lt;');
for (const el of document.querySelectorAll('[data-list]')) {
  el.innerHTML = lists[el.dataset.list].map(([ic, name, w, type, size, sw, date, attr = '-a--']) =>
    `<div class="row">${icon('f-' + ic)}<span data-w="${w}">${name}</span>`
    + `<span${type ? ` data-w="${typeWidth[type]}"` : ''}>${type}</span><span class="size" data-w="${sw}">${esc(size)}</span><span></span>`
    + `<span data-w="83.5">${date}</span><span data-w="19.5">${attr}</span></div>`).join('');
}

// Tracks every label so that it fills the width given in data-w.
const scale = document.querySelector('.desk').getBoundingClientRect().width / 5120;
for (const el of document.querySelectorAll('[data-w]')) {
  const range = document.createRange();
  range.selectNodeContents(el);
  const natural = range.getBoundingClientRect().width / scale;
  el.style.letterSpacing = ((el.dataset.w - natural) / el.textContent.length).toFixed(3) + 'px';
}
```
